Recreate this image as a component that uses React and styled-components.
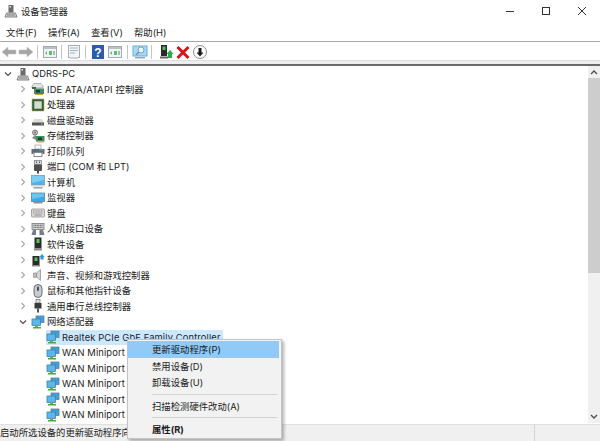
import React from 'react';
import styled, { createGlobalStyle } from 'styled-components';

const Global = createGlobalStyle`
  html, body { margin: 0; padding: 0; background: #fff; overflow: hidden; }
`;
const fontStack = `"Inter", "Noto Sans CJK SC", sans-serif`;

const Window = styled.div`
  position: relative; width: 600px; height: 441px; overflow: hidden;
  display: flex; flex-direction: column; background: #fff;
  font-family: ${fontStack}; font-size: 9.35px; color: #1c1c1c;
`;
const TitleBar = styled.div`
  height: 24px; display: flex; align-items: center; padding: 0 0 2px 4px; gap: 3px; flex: none; box-sizing: border-box;
`;
const Title = styled.span` font-size: 9.35px; flex: 1; color: #222; `;
const WinControls = styled.div` display: flex; `;
const WinButton = styled.div`
  width: 36px; height: 22px; display: flex; align-items: center; justify-content: center;
`;
const MenuBar = styled.div`
  height: 17px; display: flex; align-items: center; padding-left: 6px; gap: 11px; flex: none;
`;
const MenuItem = styled.span` font-size: 9.35px; line-height: 16px; color: #222; `;
const Toolbar = styled.div`
  border-top: 1px solid #a8a8a8; display: flex; align-items: center; flex: none; padding-top: 1px; box-sizing: border-box; height: 19px;
`;
const ToolButton = styled.div`
  width: 17px; height: 17px; display: flex; align-items: center; justify-content: center;
`;
const ToolSep = styled.div`
  width: 1px; height: 14px; background: #c4c4c4; margin: 0 ${p => p.$after || 3}px 0 ${p => p.$before || 3}px;
`;
const Band = styled.div`
  background: #eeeeee; border-top: 1px solid #dcdcdc; border-bottom: 2px solid #6a6a6a;
  box-sizing: border-box; flex: none; height: 6px;
`;
const Body = styled.div` flex: 1; display: flex; min-height: 0; `;
const Tree = styled.div` flex: 1; overflow: hidden; `;
const Row = styled.div`
  height: 15.5px; display: flex; align-items: center;
  padding-left: ${p => p.$level * 15}px;
  white-space: nowrap;
`;
const Chevron = styled.span`
  width: 16px; height: 15px; flex: none; display: flex; align-items: center; justify-content: center;
`;
const Node = styled.span`
  display: flex; align-items: center; height: 15.5px; gap: 2px; padding-right: 2px;
  background: ${p => (p.$selected ? '#cce8ff' : 'transparent')};
`;
const IconBox = styled.span` width: 14px; height: 14px; flex: none; display: flex; `;
const Label = styled.span`
  font-size: 9.35px; line-height: 15px; color: #222;
  letter-spacing: ${p => (p.$wide ? '0.13px' : '0')};
`;
const Scrollbar = styled.div`
  width: 12px; flex: none; background: #f0f0f0; display: flex; flex-direction: column;
`;
const ScrollArrow = styled.div`
  height: 12px; flex: none; display: flex; align-items: center; justify-content: center;
`;
const ScrollThumb = styled.div` height: 195px; background: #cdcdcd; margin-bottom: auto; `;
const StatusBar = styled.div`
  height: 17px; flex: none; display: flex; background: #f0f0f0; border-top: 1px solid #e0e0e0; box-sizing: border-box;
  margin-top: 1px;
`;
const StatusText = styled.div`
  width: 534px; flex: none; border-right: 1px solid #d4d4d4; font-size: 9.35px; line-height: 16px;
  white-space: nowrap; overflow: hidden; color: #222;
`;
const Menu = styled.div`
  position: absolute; left: 127px; top: 339px; width: 155px; height: 100px; box-sizing: border-box;
  background: #f2f2f2; border: 1px solid #c4c4c4; padding: 1px 2px 0 0;
  box-shadow: 2px 2px 3px rgba(0,0,0,.3);
  display: flex; flex-direction: column;
`;
const MenuRow = styled.div`
  height: 16.5px; flex: none; padding-left: 24px; display: flex; align-items: center;
  font-size: 9.35px; color: #1c1c1c; font-weight: ${p => (p.$bold ? 700 : 400)};
  background: ${p => (p.$active ? '#91c9f7' : 'transparent')};
`;
const MenuSep = styled.div` height: 1px; background: #d2d2d2; margin: 3px 2px 3px 24px; flex: none; `;

const S = p => <svg width="14" height="14" viewBox="0 0 14 14" {...p} />;
const T = p => <svg width="16" height="16" viewBox="0 0 16 16" {...p} />;

const NetMon = () => (
  <S>
    <rect x="5" y="1" width="8" height="6.5" fill="#3fa0dc" stroke="#5f7f96" strokeWidth=".8" />
    <rect x="1" y="4" width="8.5" height="6.5" fill="#58b8ee" stroke="#4a7f9f" strokeWidth=".8" />
    <rect x="4" y="10.5" width="3" height="1.5" fill="#6bb24a" />
    <rect x="2" y="12" width="8" height="1.5" fill="#4ea53a" />
  </S>
);

const icons = {
  computerRoot: () => (
    <S>
      <rect x="4.5" y="1" width="5" height="7.5" fill="#6a6a6a" />
      <rect x="5.5" y="2" width="1.5" height="1.5" fill="#eee" />
      <path d="M1 13l1.5-4h9l1.5 4z" fill="#d8d8d8" stroke="#666" strokeWidth=".8" />
      <rect x="3" y="10.5" width="8" height="1" fill="#777" />
    </S>
  ),
  ide: () => (
    <S>
      <path d="M1 4l2-2.5h7L12 4v2H1z" fill="#e4e4e4" stroke="#8a8a8a" strokeWidth=".6" />
      <rect x="1" y="5" width="4" height="2" fill="#555" />
      <rect x="3" y="6.5" width="10" height="5.5" fill="#3f8f5e" />
      <rect x="5" y="8" width="4" height="2.5" fill="#1c3f2a" />
      <rect x="4" y="12" width="8" height="1" fill="#c9a34a" />
    </S>
  ),
  cpu: () => (
    <S>
      <rect x="1" y="1" width="12" height="12" fill="#2e5f3d" stroke="#c9a34a" strokeWidth="1" strokeDasharray="1 .6" />
      <rect x="3" y="3" width="8" height="8" fill="#d8dcd0" stroke="#44664f" strokeWidth=".6" />
    </S>
  ),
  disk: () => (
    <S>
      <path d="M3 6h8l2 4H1z" fill="#dcdcdc" />
      <rect x="1" y="9.5" width="12" height="3" fill="#555" />
      <rect x="10" y="10.5" width="1.5" height="1" fill="#9ad07a" />
    </S>
  ),
  storage: () => (
    <S>
      <circle cx="4" cy="3.5" r="2.5" fill="#d0d0d0" stroke="#555" strokeWidth=".8" />
      <circle cx="4" cy="3.5" r=".9" fill="#555" />
      <path d="M1 9l3-3 3 2-2 3z" fill="#8a8a8a" />
      <rect x="5" y="7" width="8.5" height="5.5" fill="#3f8f5e" />
      <rect x="7" y="8.5" width="4" height="2.5" fill="#1c3f2a" />
      <rect x="6" y="12.5" width="7" height="1" fill="#c9a34a" />
    </S>
  ),
  printer: () => (
    <S>
      <rect x="4" y="1" width="6" height="4" fill="#fff" stroke="#888" strokeWidth=".6" />
      <path d="M0.5 5h13v5h-2V8h-9v2h-2z" fill="#5b6b78" />
      <rect x="3" y="8.5" width="8" height="4" fill="#fff" stroke="#555" strokeWidth=".7" />
      <rect x="8" y="5.5" width="4" height="1" fill="#4ab0e0" />
    </S>
  ),
  port: () => (
    <S>
      <rect x="3.5" y="0.5" width="7" height="4" fill="#d8d8d8" stroke="#666" strokeWidth=".6" />
      <rect x="5" y="1.5" width="1" height="1.5" fill="#555" />
      <rect x="8" y="1.5" width="1" height="1.5" fill="#555" />
      <rect x="3" y="4.5" width="8" height="6.5" rx="1" fill="#4f4f4f" />
      <rect x="6" y="11" width="2" height="2.5" fill="#4f4f4f" />
    </S>
  ),
  computer: () => (
    <S>
      <rect x="0.5" y="0.5" width="13" height="9.5" fill="#4eb2ec" stroke="#8c9aa4" strokeWidth=".8" />
      <path d="M1 1h12v4L1 8z" fill="#7cccf4" />
      <rect x="0.5" y="10" width="13" height="1.5" fill="#cfd4d8" />
      <rect x="2.5" y="12" width="9" height="1.5" fill="#9aa2a8" />
    </S>
  ),
  monitor: () => (
    <S>
      <rect x="0.5" y="2" width="13" height="8.5" fill="#3fa8e6" stroke="#5f7f96" strokeWidth=".8" />
      <path d="M1 2.5h12v3L1 8z" fill="#6cc4f2" />
      <rect x="2.5" y="11" width="9" height="1.5" fill="#8a949a" />
    </S>
  ),
  keyboard: () => (
    <S>
      <rect x="0.5" y="3" width="13" height="8" rx=".7" fill="#d8d8d8" stroke="#8a8a8a" strokeWidth=".7" />
      <path d="M2 5h10M2 7h10" stroke="#8c8c8c" strokeWidth="1" strokeDasharray="1 .6" />
      <rect x="3.5" y="8.5" width="7" height="1" fill="#8c8c8c" />
    </S>
  ),
  hid: () => (
    <S>
      <rect x="1" y="1.5" width="12" height="6" fill="#cfcfcf" stroke="#6a6a6a" strokeWidth=".7" />
      <path d="M2.5 3.3h9M2.5 5.3h9" stroke="#5a5a5a" strokeWidth="1" strokeDasharray="1 .6" />
      <path d="M0.5 13l1.5-5h3v5zM8.5 13V8h3.5l1.5 5z" fill="#6f7f8c" />
    </S>
  ),
  softDev: () => (
    <S>
      <rect x="3.5" y="0.5" width="7" height="11" fill="#2b2b2b" />
      <rect x="5.5" y="2" width="3" height="4" fill="#56c456" />
      <rect x="3" y="11.5" width="8" height="2" fill="#8a8a8a" />
    </S>
  ),
  softComp: () => (
    <S>
      <rect x="1.5" y="3" width="7" height="9" fill="#2b2b2b" />
      <rect x="3.5" y="4.5" width="3" height="3.5" fill="#56c456" />
      <rect x="1" y="12" width="8" height="1.5" fill="#8a8a8a" />
      <path d="M11 0.5l1 2 1.5.5-1 1.5v2h-3v-2l-1-1.5 1.5-.5z" fill="#3f90e0" />
    </S>
  ),
  sound: () => (
    <S>
      <rect x="2.5" y="5" width="3" height="4.5" fill="#bdbdbd" stroke="#777" strokeWidth=".5" />
      <path d="M5.5 5l4-3.5v11l-4-3.5z" fill="#d4d4d4" stroke="#777" strokeWidth=".6" />
    </S>
  ),
  mouse: () => (
    <S>
      <rect x="3" y="0.5" width="8" height="13" rx="4" fill="#c8ccd2" stroke="#5a6068" strokeWidth=".9" />
      <rect x="6" y="2.5" width="2" height="4.5" rx="1" fill="#4a5058" />
    </S>
  ),
  usb: () => (
    <S>
      <rect x="5" y="0.5" width="4" height="3.5" fill="#e4e4e4" stroke="#555" strokeWidth=".6" />
      <rect x="3.5" y="4" width="7" height="5.5" fill="#3a3a3a" />
      <rect x="6" y="9.5" width="2" height="4" fill="#555" />
    </S>
  ),
  net: NetMon,
};

const Expand = ({ open }) => (
  <svg width="8" height="8" viewBox="0 0 8 8">
    {open
      ? <path d="M1 2.5l3 3 3-3" fill="none" stroke="#4a4a4a" strokeWidth="1.1" />
      : <path d="M2.5 1l3 3-3 3" fill="none" stroke="#a6a6a6" strokeWidth="1.1" />}
  </svg>
);

const rows = [
  { level: 0, icon: 'computerRoot', text: 'QDRS-PC', open: true },
  { level: 1, icon: 'ide', text: 'IDE ATA/ATAPI 控制器', wide: true },
  { level: 1, icon: 'cpu', text: '处理器' },
  { level: 1, icon: 'disk', text: '磁盘驱动器' },
  { level: 1, icon: 'storage', text: '存储控制器' },
  { level: 1, icon: 'printer', text: '打印队列' },
  { level: 1, icon: 'port', text: '端口 (COM 和 LPT)' },
  { level: 1, icon: 'computer', text: '计算机' },
  { level: 1, icon: 'monitor', text: '监视器' },
  { level: 1, icon: 'keyboard', text: '键盘' },
  { level: 1, icon: 'hid', text: '人机接口设备' },
  { level: 1, icon: 'softDev', text: '软件设备' },
  { level: 1, icon: 'softComp', text: '软件组件' },
  { level: 1, icon: 'sound', text: '声音、视频和游戏控制器' },
  { level: 1, icon: 'mouse', text: '鼠标和其他指针设备' },
  { level: 1, icon: 'usb', text: '通用串行总线控制器' },
  { level: 1, icon: 'net', text: '网络适配器', open: true },
  { level: 2, icon: 'net', text: 'Realtek PCIe GbE Family Controller', selected: true, leaf: true, wide: true },
  { level: 2, icon: 'net', text: 'WAN Miniport (IKEv2)', leaf: true, wide: true },
  { level: 2, icon: 'net', text: 'WAN Miniport (IP)', leaf: true, wide: true },
  { level: 2, icon: 'net', text: 'WAN Miniport (IPv6)', leaf: true, wide: true },
  { level: 2, icon: 'net', text: 'WAN Miniport (L2TP)', leaf: true, wide: true },
  { level: 2, icon: 'net', text: 'WAN Miniport (PPPOE)', leaf: true, wide: true },
];

const PanelIcon = ({ accent }) => (
  <T>
    <rect x="1.5" y="2.5" width="13" height="11" fill="#f2f5f6" stroke="#a2abb2" />
    <rect x="2" y="3" width="12" height="2" fill="#b8c2c9" />
    <path d="M5 7v4l-2-2z" fill={accent} />
    <rect x="7" y="7" width="3" height="4" fill={accent} />
    <rect x="11" y="7" width="2" height="4" fill="#b0b8be" />
  </T>
);

export default function App() {
  return (
    <Window>
      <Global />
      <TitleBar>
        <IconBox><icons.computerRoot /></IconBox>
        <Title>设备管理器</Title>
        <WinControls>
          <WinButton>
            <svg width="10" height="10"><path d="M1 5.5h8" stroke="#333" /></svg>
          </WinButton>
          <WinButton>
            <svg width="10" height="10"><rect x="1.5" y="1.5" width="7" height="7" fill="none" stroke="#333" /></svg>
          </WinButton>
          <WinButton>
            <svg width="10" height="10"><path d="M1 1l8 8M9 1l-8 8" stroke="#333" /></svg>
          </WinButton>
        </WinControls>
      </TitleBar>
      <MenuBar>
        <MenuItem>文件(F)</MenuItem>
        <MenuItem>操作(A)</MenuItem>
        <MenuItem>查看(V)</MenuItem>
        <MenuItem>帮助(H)</MenuItem>
      </MenuBar>
      <Toolbar>
        <ToolButton><T><path d="M1 8l6-5v3h8v4H7v3z" fill="#a4a4a4" stroke="#c4c4c4" strokeWidth=".6" /></T></ToolButton>
        <ToolButton><T><path d="M15 8l-6-5v3H1v4h8v3z" fill="#a4a4a4" stroke="#c4c4c4" strokeWidth=".6" /></T></ToolButton>
        <ToolSep />
        <ToolButton><PanelIcon accent="#5cc070" /></ToolButton>
        <ToolSep />
        <ToolButton>
          <T>
            <rect x="2.5" y="1.5" width="11" height="12" fill="#f2f5f6" stroke="#a8b0b6" />
            <path d="M4 4h8M4 6.5h8M4 9h5" stroke="#a4b4c0" />
            <rect x="4" y="13" width="8" height="2" fill="#ccd3d8" />
          </T>
        </ToolButton>
        <ToolSep />
        <ToolButton>
          <T>
            <rect x="2" y="1" width="12" height="14" fill="#2a5cb4" />
            <text x="8" y="12.5" textAnchor="middle" fontSize="12" fontWeight="700" fill="#fff" fontFamily="Liberation Sans">?</text>
          </T>
        </ToolButton>
        <ToolButton><PanelIcon accent="#5cc070" /></ToolButton>
        <ToolSep $before={4} />
        <ToolButton>
          <T>
            <rect x="1" y="2" width="14" height="10" fill="#a4daf6" stroke="#62b0de" />
            <circle cx="9" cy="6" r="3" fill="#e8f6fc" stroke="#80a0b4" />
            <path d="M7 8l-3 3" stroke="#7c8c98" strokeWidth="1.4" />
            <rect x="3" y="13" width="10" height="1.5" fill="#9aa8b2" />
          </T>
        </ToolButton>
        <ToolSep $after={5} />
        <ToolButton>
          <T>
            <rect x="3" y="1" width="6" height="11" fill="#2b2b2b" />
            <rect x="4.5" y="2.5" width="3" height="3.5" fill="#56c456" />
            <rect x="2" y="12.5" width="8" height="2" fill="#666" />
            <path d="M12 6l3.5 4H14v4h-4v-4H8.5z" fill="#2fa84a" />
          </T>
        </ToolButton>
        <ToolButton>
          <T><path d="M2.5 3L13.5 14M13.5 3L2.5 14" stroke="#d8141c" strokeWidth="3" /></T>
        </ToolButton>
        <ToolButton>
          <T>
            <circle cx="8" cy="8" r="6.5" fill="#fff" stroke="#8a8a8a" />
            <path d="M8 12.5L4.5 8.5H6.5V4h3v4.5h2z" fill="#1a1a1a" />
          </T>
        </ToolButton>
      </Toolbar>
      <Band />
      <Body>
        <Tree>
          {rows.map((r, i) => (
            <Row key={i} $level={r.level}>
              <Chevron>{!r.leaf && <Expand open={r.open} />}</Chevron>
              <Node $selected={r.selected}>
                <IconBox>{React.createElement(icons[r.icon])}</IconBox>
                <Label $wide={r.wide}>{r.text}</Label>
              </Node>
            </Row>
          ))}
        </Tree>
        <Scrollbar>
          <ScrollArrow>
            <svg width="8" height="6"><path d="M1 5l3-3 3 3" fill="none" stroke="#505050" strokeWidth="1.4" /></svg>
          </ScrollArrow>
          <ScrollThumb />
          <ScrollArrow>
            <svg width="8" height="6"><path d="M1 1l3 3 3-3" fill="none" stroke="#505050" strokeWidth="1.4" /></svg>
          </ScrollArrow>
        </Scrollbar>
      </Body>
      <StatusBar>
        <StatusText>启动所选设备的更新驱动程序向导。</StatusText>
      </StatusBar>
      <Menu>
        <MenuRow $active>更新驱动程序(P)</MenuRow>
        <MenuRow>禁用设备(D)</MenuRow>
        <MenuRow>卸载设备(U)</MenuRow>
        <MenuSep />
        <MenuRow>扫描检测硬件改动(A)</MenuRow>
        <MenuSep />
        <MenuRow $bold>属性(R)</MenuRow>
      </Menu>
    </Window>
  );
}
